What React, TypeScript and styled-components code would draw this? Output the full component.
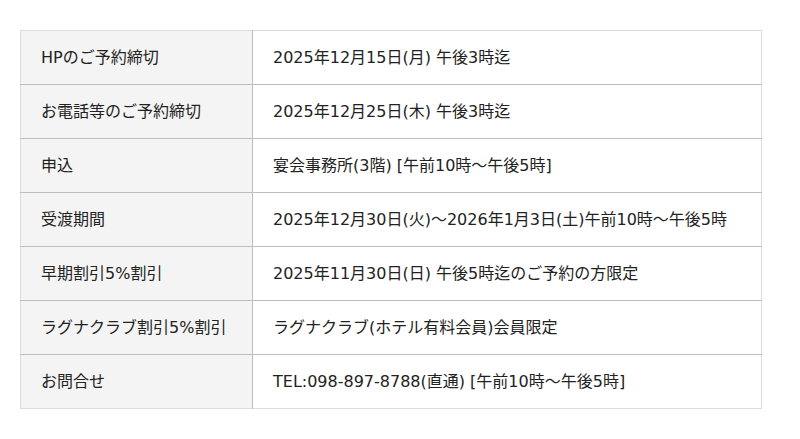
import React from "react";
import styled, { createGlobalStyle } from "styled-components";

const Global = createGlobalStyle`
  html, body { margin: 0; padding: 0; background: #fff; }
  body { font-family: "DejaVu Sans", "Noto Sans CJK JP", sans-serif; color: #222; }
`;

const Page = styled.div`
  padding: 30px 20px;
`;

const Table = styled.table`
  width: 742px;
  border-collapse: collapse;
  border: 1px solid #dcdcdc;
  font-family: "DejaVu Sans", "Noto Sans CJK JP", sans-serif;
  font-size: 16px;
  color: #222;
`;

const Row = styled.tr`
  height: 54px;
  border-bottom: 1px solid #bdbdbd;
  &:last-child { border-bottom: 1px solid #dcdcdc; }
`;

const Head = styled.th`
  width: 232px;
  box-sizing: border-box;
  background: #f4f4f4;
  border-right: 1px solid #bdbdbd;
  text-align: left;
  font-weight: normal;
  padding: 0 20px 4px;
  vertical-align: middle;
`;

const Cell = styled.td`
  text-align: left;
  padding: 0 20px 4px;
  vertical-align: middle;
`;

const rows: [string, string][] = [
  ["HPのご予約締切", "2025年12月15日(月) 午後3時迄"],
  ["お電話等のご予約締切", "2025年12月25日(木) 午後3時迄"],
  ["申込", "宴会事務所(3階) [午前10時～午後5時]"],
  ["受渡期間", "2025年12月30日(火)～2026年1月3日(土)午前10時～午後5時"],
  ["早期割引5%割引", "2025年11月30日(日) 午後5時迄のご予約の方限定"],
  ["ラグナクラブ割引5%割引", "ラグナクラブ(ホテル有料会員)会員限定"],
  ["お問合せ", "TEL:098-897-8788(直通) [午前10時～午後5時]"],
];

export default function App() {
  return (
    <Page>
      <Global />
      <Table>
        <tbody>
          {rows.map(([h, v]) => (
            <Row key={h}>
              <Head>{h}</Head>
              <Cell>{v}</Cell>
            </Row>
          ))}
        </tbody>
      </Table>
    </Page>
  );
}
